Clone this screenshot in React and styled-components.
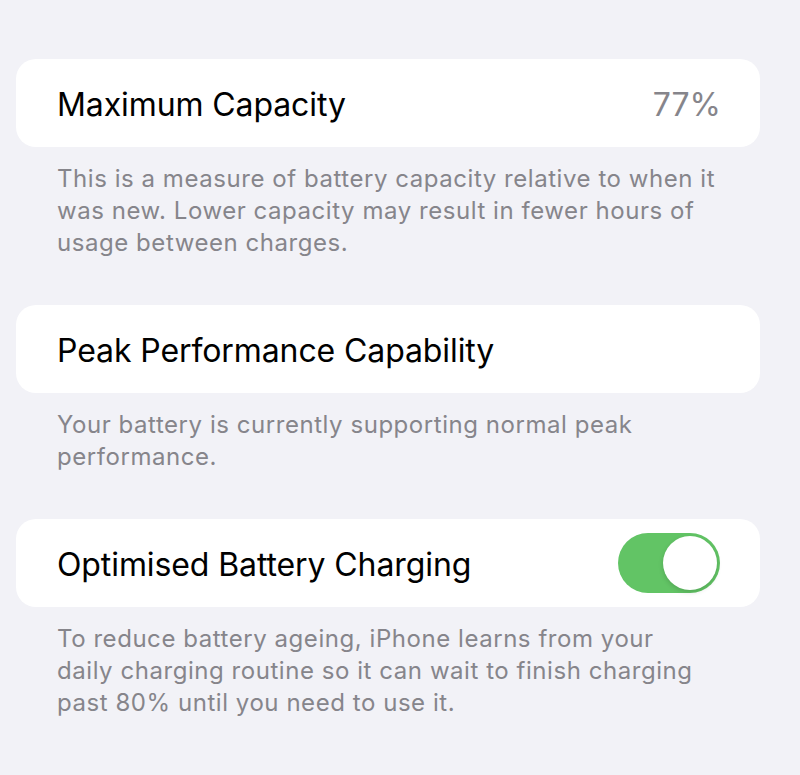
import styled, { createGlobalStyle } from 'styled-components';

const GlobalStyle = createGlobalStyle`
  body {
    margin: 0;
    background: #f2f2f7;
    font-family: Inter, "Noto Sans", sans-serif;
    -webkit-font-smoothing: antialiased;
  }
`;

// footer notes keep the line breaks of the settings screen
const sections = [
  {
    title: 'Maximum Capacity',
    value: '77%',
    note: [
      'This is a measure of battery capacity relative to when it',
      'was new. Lower capacity may result in fewer hours of',
      'usage between charges.',
    ],
  },
  {
    title: 'Peak Performance Capability',
    note: ['Your battery is currently supporting normal peak', 'performance.'],
  },
  {
    title: 'Optimised Battery Charging',
    toggle: true,
    note: [
      'To reduce battery ageing, iPhone learns from your',
      'daily charging routine so it can wait to finish charging',
      'past 80% until you need to use it.',
    ],
  },
];

const App = () => {
  return (
    <Page>
      <GlobalStyle />
      {sections.map((s) => (
        <Section key={s.title}>
          <Card>
            <Title>{s.title}</Title>
            {s.value && <Value>{s.value}</Value>}
            {s.toggle && (
              <Switch $on>
                <Knob />
              </Switch>
            )}
          </Card>
          <Note>
            {s.note.map((line) => (
              <NoteLine key={line}>{line}</NoteLine>
            ))}
          </Note>
        </Section>
      ))}
    </Page>
  );
};

export default App;

const Page = styled.div`
  width: 744px;
  padding: 59px 0 0 16px;
  display: flex;
  flex-direction: column;
  gap: 46px;
`;

const Section = styled.section`
  display: flex;
  flex-direction: column;
`;

const Card = styled.div`
  height: 88px;
  background: #fff;
  border-radius: 20px;
  padding: 3px 40px 0 41px;
  box-sizing: border-box;
  display: flex;
  align-items: center;
  justify-content: space-between;
`;

const Title = styled.span`
  font-size: 32px;
  color: #000;
  letter-spacing: -0.1px;
`;

const Value = styled.span`
  font-size: 32px;
  color: #86858b;
  margin-right: -1px;
`;

const Switch = styled.div`
  width: 102px;
  height: 60px;
  margin-top: -3px;
  border-radius: 30px;
  background: ${(p) => (p.$on ? '#62c465' : '#e9e9ea')};
  display: flex;
  align-items: center;
  justify-content: ${(p) => (p.$on ? 'flex-end' : 'flex-start')};
  padding: 0 3px;
  box-sizing: border-box;
`;

const Knob = styled.div`
  width: 54px;
  height: 54px;
  border-radius: 50%;
  background: #fff;
  box-shadow: 0 2px 5px rgba(0, 0, 0, 0.15);
`;

const Note = styled.p`
  margin: 0;
  padding: 16px 40px 0 41px;
  font-size: 24px;
  line-height: 32px;
  letter-spacing: 0.55px;
  color: #86858b;
`;

const NoteLine = styled.span`
  display: block;
  white-space: nowrap;
`;
